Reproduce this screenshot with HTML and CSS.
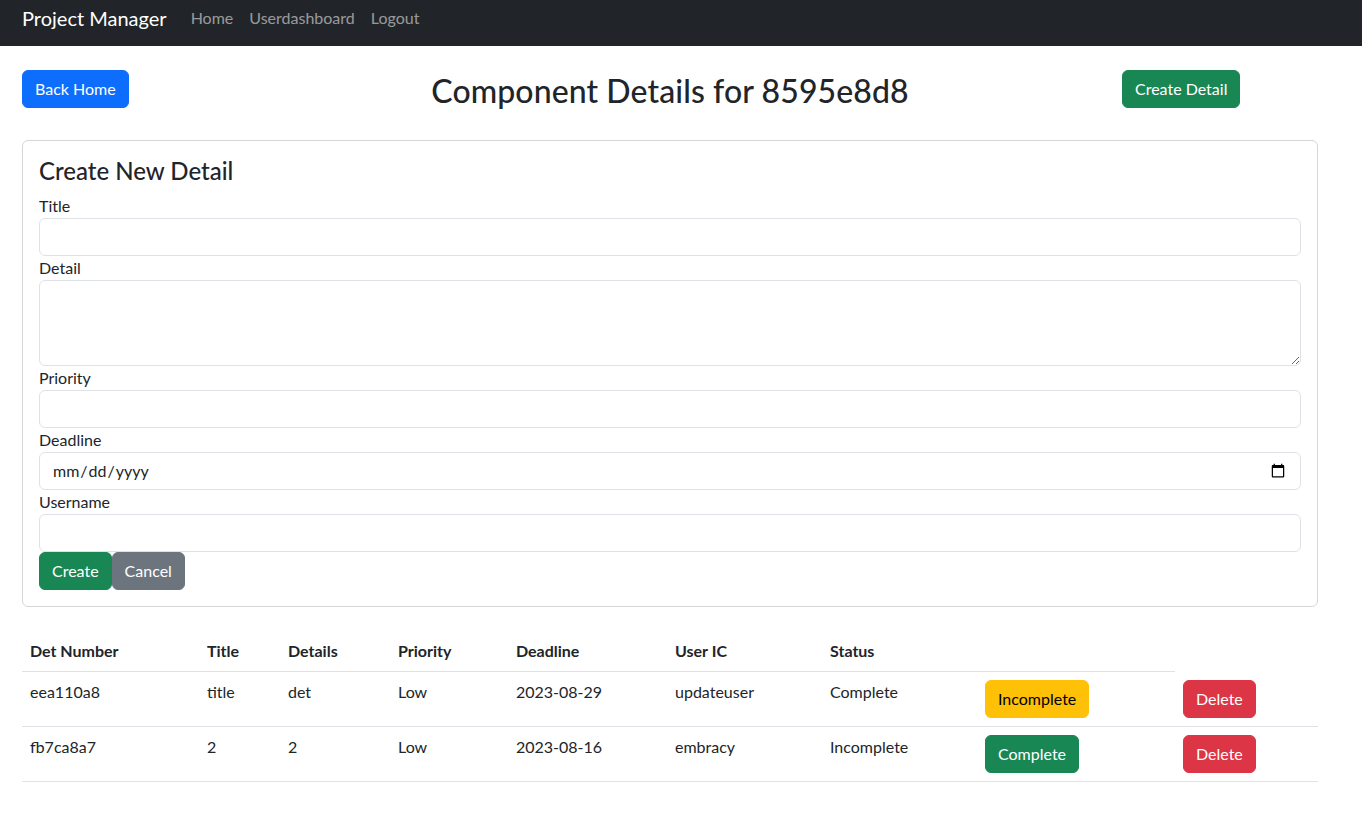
FILE: index.html
```html
<!DOCTYPE html>
<html lang="en">
<head>
<meta charset="utf-8">
<title>Project Manager</title>
<link rel="stylesheet" href="styles.css">
</head>
<body>
<nav class="navbar">
  <a class="brand" href="#">Project Manager</a>
  <a class="nav-link" href="#">Home</a>
  <a class="nav-link" href="#">Userdashboard</a>
  <a class="nav-link" href="#">Logout</a>
</nav>
<main class="page">
  <div class="header-row">
    <div class="header-left"><button class="btn btn-primary">Back Home</button></div>
    <h2 class="page-title">Component Details for 8595e8d8</h2>
    <div class="header-right"><button class="btn btn-success">Create Detail</button></div>
  </div>

  <section class="card">
    <h4 class="card-title">Create New Detail</h4>
    <form class="form">
      <label class="form-label">Title</label>
      <input class="form-control" type="text">
      <label class="form-label">Detail</label>
      <textarea class="form-control textarea" rows="3"></textarea>
      <label class="form-label">Priority</label>
      <input class="form-control" type="text">
      <label class="form-label">Deadline</label>
      <input class="form-control" type="date">
      <label class="form-label">Username</label>
      <input class="form-control" type="text">
      <div class="form-actions">
        <button type="button" class="btn btn-success">Create</button><button type="button" class="btn btn-secondary">Cancel</button>
      </div>
    </form>
  </section>

  <table class="table">
    <colgroup>
      <col class="c1"><col class="c2"><col class="c3"><col class="c4"><col class="c5"><col class="c6"><col class="c7"><col class="c8"><col class="c9">
    </colgroup>
    <thead>
      <tr>
        <th>Det Number</th><th>Title</th><th>Details</th><th>Priority</th><th>Deadline</th><th>User IC</th><th>Status</th><th></th>
      </tr>
    </thead>
    <tbody>
      <tr>
        <td>eea110a8</td><td>title</td><td>det</td><td>Low</td><td>2023-08-29</td><td>updateuser</td><td>Complete</td>
        <td><button class="btn btn-warning">Incomplete</button></td>
        <td><button class="btn btn-danger">Delete</button></td>
      </tr>
      <tr>
        <td>fb7ca8a7</td><td>2</td><td>2</td><td>Low</td><td>2023-08-16</td><td>embracy</td><td>Incomplete</td>
        <td><button class="btn btn-success">Complete</button></td>
        <td><button class="btn btn-danger">Delete</button></td>
      </tr>
    </tbody>
  </table>
</main>
</body>
</html>
```

FILE: styles.css
```css
* { box-sizing: border-box; }

body {
  margin: 0;
  font-family: "Lato", "Open Sans", "Liberation Sans", sans-serif;
  font-size: 16px;
  line-height: 1.5;
  color: #212529;
  background: #fff;
}

.navbar {
  height: 46px;
  background: #212529;
  display: flex;
  align-items: flex-start;
  padding: 3px 22px 0;
}

.brand {
  color: #fff;
  font-size: 20px;
  line-height: 30px;
  text-decoration: none;
  margin-right: 16px;
}

.nav-link {
  color: rgba(255, 255, 255, 0.55);
  text-decoration: none;
  line-height: 30px;
  padding: 0 8px;
}

.page {
  padding: 24px 44px 40px 22px;
}

.header-row {
  display: grid;
  grid-template-columns: 216px 1fr 216px;
  align-items: start;
}

.header-right { padding-left: 20px; }

.page-title {
  margin: 0;
  text-align: center;
  font-size: 32px;
  font-weight: 500;
  line-height: 1.2;
  padding-top: 2px;
  letter-spacing: 0.1px;
}

.btn {
  display: inline-block;
  font-family: inherit;
  font-size: 16px;
  line-height: 24px;
  padding: 6px 12px;
  border: 1px solid transparent;
  border-radius: 6px;
  cursor: pointer;
  color: #fff;
}

.btn-primary { background: #0d6efd; border-color: #0d6efd; }
.btn-success { background: #198754; border-color: #198754; }
.btn-secondary { background: #6c757d; border-color: #6c757d; }
.btn-warning { background: #ffc107; border-color: #ffc107; color: #000; }
.btn-danger { background: #dc3545; border-color: #dc3545; }

.card {
  margin-top: 30px;
  border: 1px solid #d6d6d6;
  border-radius: 6px;
  padding: 16px;
}

.card-title {
  margin: 0 0 8px;
  font-size: 24px;
  font-weight: 500;
  line-height: 1.2;
}

.form {
  display: flex;
  flex-direction: column;
  margin: 0;
}

.form-label {
  line-height: 24px;
}

.form-control {
  display: block;
  width: 100%;
  font-family: inherit;
  font-size: 16px;
  line-height: 24px;
  padding: 6px 12px;
  color: #212529;
  background: #fff;
  border: 1px solid #dee2e6;
  border-radius: 6px;
  height: 38px;
}

.textarea {
  height: 86px;
  resize: vertical;
}

.form-actions {
  display: flex;
}

.table {
  margin-top: 24px;
  width: 100%;
  border-collapse: collapse;
  table-layout: fixed;
}

.c1 { width: 177px; }
.c2 { width: 81px; }
.c3 { width: 110px; }
.c4 { width: 118px; }
.c5 { width: 159px; }
.c6 { width: 155px; }
.c7 { width: 155px; }
.c8 { width: 198px; }
.c9 { width: 143px; }

.table th, .table td {
  padding: 8px;
  text-align: left;
  vertical-align: top;
  border-bottom: 1px solid #dee2e6;
  line-height: 24px;
}

.table th { font-weight: 700; }
```
